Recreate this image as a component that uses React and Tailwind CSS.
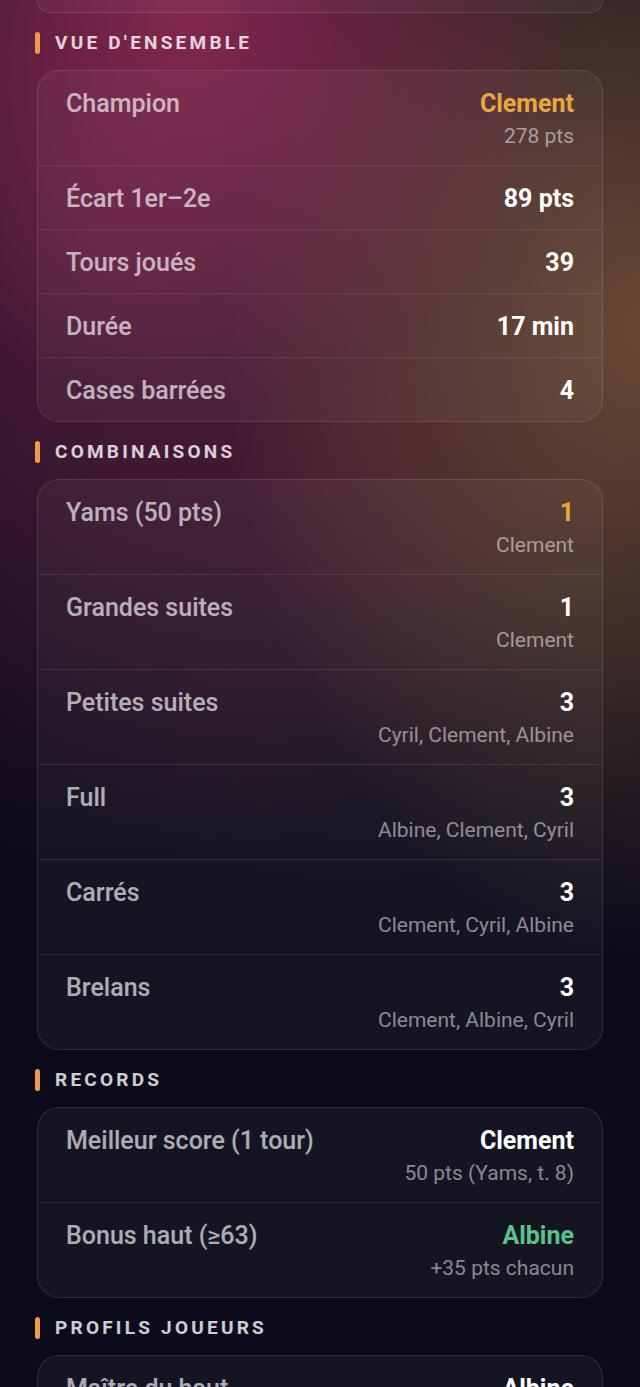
const sections = [
  {
    title: "VUE D'ENSEMBLE",
    rows: [
      { label: 'Champion', value: 'Clement', tone: 'gold', sub: '278 pts' },
      { label: 'Écart 1er–2e', value: '89 pts' },
      { label: 'Tours joués', value: '39' },
      { label: 'Durée', value: '17 min' },
      { label: 'Cases barrées', value: '4' },
    ],
  },
  {
    title: 'COMBINAISONS',
    rows: [
      { label: 'Yams (50 pts)', value: '1', tone: 'gold', sub: 'Clement' },
      { label: 'Grandes suites', value: '1', sub: 'Clement' },
      { label: 'Petites suites', value: '3', sub: 'Cyril, Clement, Albine' },
      { label: 'Full', value: '3', sub: 'Albine, Clement, Cyril' },
      { label: 'Carrés', value: '3', sub: 'Clement, Cyril, Albine' },
      { label: 'Brelans', value: '3', sub: 'Clement, Albine, Cyril' },
    ],
  },
  {
    title: 'RECORDS',
    rows: [
      { label: 'Meilleur score (1 tour)', value: 'Clement', sub: '50 pts (Yams, t. 8)' },
      { label: 'Bonus haut (≥63)', value: 'Albine', tone: 'green', sub: '+35 pts chacun' },
    ],
  },
  {
    title: 'PROFILS JOUEURS',
    rows: [{ label: 'Maître du haut', value: 'Albine', sub: '72 pts en haut' }],
  },
]

const toneClass = {
  gold: 'text-[#eaa83c]',
  green: 'text-[#58c488]',
  default: 'text-white',
}

function StatRow({ row, last }) {
  return (
    <div
      className={`flex items-start justify-between gap-4 px-[28px] pt-[19px] pb-[16px] ${
        last ? '' : 'border-b border-white/[0.09]'
      }`}
    >
      <span className="text-[25px] font-medium leading-[28px] text-white/65">{row.label}</span>
      <div className="flex flex-col items-end text-right">
        <span className={`text-[25px] font-bold leading-[28px] ${toneClass[row.tone || 'default']}`}>
          {row.value}
        </span>
        {row.sub && (
          <span className="mt-[5px] text-[21px] leading-[26px] text-white/50">{row.sub}</span>
        )}
      </div>
    </div>
  )
}

function Section({ section }) {
  return (
    <section>
      <div className="mt-[19px] mb-[16px] flex h-[22px] items-center gap-[15px] -ml-[2px]">
        <span className="h-[22px] w-[5px] rounded-full bg-[#ee9a4e]" />
        <h2 className="text-[19px] font-bold tracking-[0.17em] text-white/80">{section.title}</h2>
      </div>
      <div className="overflow-hidden rounded-[22px] border border-white/[0.1] bg-white/[0.04]">
        {section.rows.map((row, i) => (
          <StatRow key={row.label} row={row} last={i === section.rows.length - 1} />
        ))}
      </div>
    </section>
  )
}

export default function App() {
  return (
    <main className="min-h-screen bg-[#0c0b1b] bg-[radial-gradient(ellipse_60%_26%_at_30%_1%,rgba(150,45,85,0.8),transparent),radial-gradient(ellipse_65%_42%_at_100%_22%,rgba(125,88,56,0.78),transparent),radial-gradient(ellipse_95%_42%_at_18%_16%,rgba(95,30,65,0.8),transparent),radial-gradient(ellipse_70%_30%_at_55%_30%,rgba(80,40,50,0.5),transparent)] pb-10 font-['Roboto',sans-serif]">
      <div className="px-[37px]">
        <div className="h-[13px] rounded-b-[22px] border border-t-0 border-white/[0.1] bg-white/[0.04]" />
        {sections.map((section) => (
          <Section key={section.title} section={section} />
        ))}
      </div>
    </main>
  )
}
